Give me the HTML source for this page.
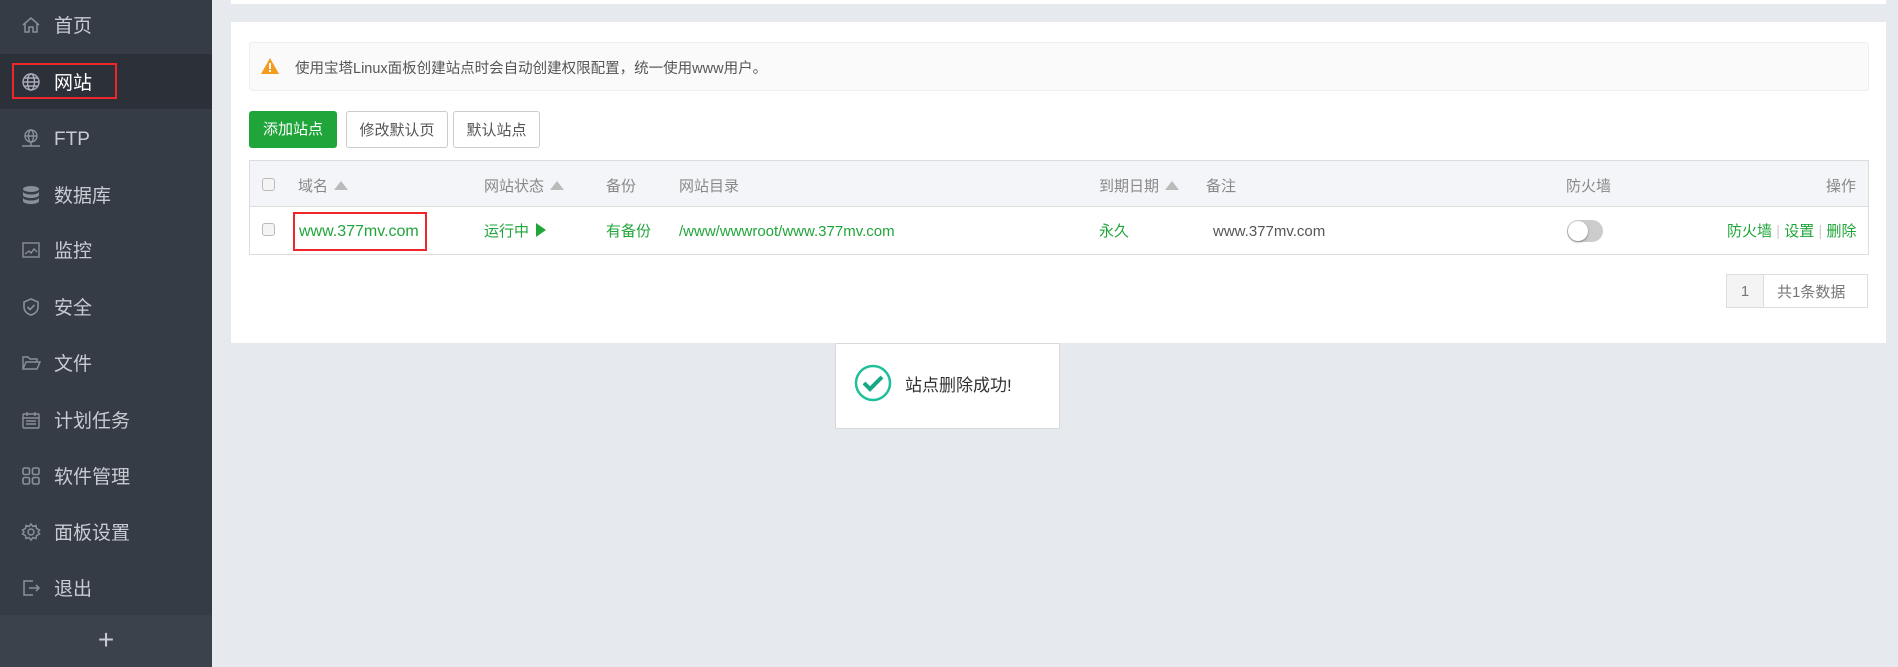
<!DOCTYPE html>
<html><head><meta charset="utf-8"><style>
*{margin:0;padding:0;box-sizing:border-box}
body{width:1898px;height:667px;overflow:hidden;background:#e6e9ee;font-family:"Liberation Sans","Noto Sans CJK SC",sans-serif;position:relative}
.a{position:absolute}
#side{left:0;top:0;width:212px;height:667px;background:#363c45}
.item{position:absolute;left:0;width:212px;height:56px;color:#c8ccd2;font-size:19px}
.item span{position:absolute;left:54px;line-height:56px;top:3px}
.item svg{position:absolute;left:21px;top:19px}
.th{position:absolute;top:164px;height:46px;line-height:46px;font-size:15px;color:#888}
.td{position:absolute;top:208px;height:48px;line-height:48px;font-size:15px;color:#20a53a}
.tri{display:inline-block;width:0;height:0;border-left:7px solid transparent;border-right:7px solid transparent;border-bottom:9px solid #bbb;margin-left:6px;vertical-align:1px}
.cb{position:absolute;width:13px;height:13px;border:1px solid #bbb;border-radius:3px;background:#f4f4f4}
.btn{position:absolute;top:111px;height:37px;line-height:37px;font-size:15px;text-align:center;border-radius:3px}
</style></head><body>
<div id="side" class="a">
 <div class="item" style="top:-4px"><svg width="20" height="20" viewBox="0 0 20 20" fill="none" stroke="#8a9099" stroke-width="1.5"><path d="M2 10L10 3l8 7M4 8.5V17h4v-5h4v5h4V8.5"/></svg><span>首页</span></div>
 <div class="a" style="left:0;top:54px;width:212px;height:55px;background:#2c3038"></div>
 <div class="item" style="top:53px;color:#fff"><svg width="20" height="20" viewBox="0 0 20 20" fill="none" stroke="#aab" stroke-width="1.4"><circle cx="10" cy="10" r="8"/><ellipse cx="10" cy="10" rx="3.5" ry="8"/><path d="M2 10h16M3.5 6h13M3.5 14h13"/></svg><span>网站</span></div>
 <div class="a" style="left:12px;top:63px;width:105px;height:36px;border:2px solid #f0262a"></div>
 <div class="item" style="top:109px"><svg width="20" height="20" viewBox="0 0 20 20" fill="none" stroke="#8a9099" stroke-width="1.4"><circle cx="10" cy="8" r="6"/><ellipse cx="10" cy="8" rx="2.5" ry="6"/><path d="M4 8h12M1 18h18M10 14v4"/></svg><span>FTP</span></div>
 <div class="item" style="top:166px"><svg width="20" height="20" viewBox="0 0 20 20" fill="#8a9099"><ellipse cx="10" cy="4" rx="8" ry="3"/><path d="M2 6.5c0 1.7 3.6 3 8 3s8-1.3 8-3V10c0 1.7-3.6 3-8 3s-8-1.3-8-3zM2 12.5c0 1.7 3.6 3 8 3s8-1.3 8-3V16c0 1.7-3.6 3-8 3s-8-1.3-8-3z"/></svg><span>数据库</span></div>
 <div class="item" style="top:221px"><svg width="20" height="20" viewBox="0 0 20 20" fill="none" stroke="#8a9099" stroke-width="1.4"><rect x="2" y="3" width="16" height="14"/><path d="M4 14l4-3 2 2 3-4 3 3"/></svg><span>监控</span></div>
 <div class="item" style="top:278px"><svg width="20" height="20" viewBox="0 0 20 20" fill="none" stroke="#8a9099" stroke-width="1.6"><path d="M10 2l7 3v5c0 4-3 7-7 8-4-1-7-4-7-8V5z"/><path d="M6.5 10l2.5 2.5 4.5-4.5"/></svg><span>安全</span></div>
 <div class="item" style="top:334px"><svg width="20" height="20" viewBox="0 0 20 20" fill="none" stroke="#8a9099" stroke-width="1.4"><path d="M2 16V4h5l2 2h7v3M2 16l3-7h14l-3 7z"/></svg><span>文件</span></div>
 <div class="item" style="top:391px"><svg width="20" height="20" viewBox="0 0 20 20" fill="none" stroke="#8a9099" stroke-width="1.4"><rect x="2" y="4" width="16" height="14" rx="1"/><path d="M2 8h16M6 2v4M14 2v4M5 11h10M5 14h10"/></svg><span>计划任务</span></div>
 <div class="item" style="top:447px"><svg width="20" height="20" viewBox="0 0 20 20" fill="none" stroke="#8a9099" stroke-width="1.6"><rect x="2" y="2" width="6.5" height="6.5" rx="1.5"/><rect x="11.5" y="2" width="6.5" height="6.5" rx="1.5"/><rect x="2" y="11.5" width="6.5" height="6.5" rx="1.5"/><rect x="11.5" y="11.5" width="6.5" height="6.5" rx="1.5"/></svg><span>软件管理</span></div>
 <div class="item" style="top:503px"><svg width="20" height="20" viewBox="0 0 20 20" fill="none" stroke="#8a9099" stroke-width="1.5"><circle cx="10" cy="10" r="3"/><path d="M10 2l2 2.5 3-1 .5 3 3 1.5-1.5 2 1.5 2-3 1.5-.5 3-3-1-2 2.5-2-2.5-3 1-.5-3-3-1.5 1.5-2-1.5-2 3-1.5.5-3 3 1z"/></svg><span>面板设置</span></div>
 <div class="item" style="top:559px"><svg width="20" height="20" viewBox="0 0 20 20" fill="none" stroke="#8a9099" stroke-width="1.5"><path d="M12 3H3v14h9M8 10h10M15 7l3 3-3 3"/></svg><span>退出</span></div>
 <div class="a" style="left:0;top:615px;width:212px;height:52px;background:#3c424b;color:#c8ccd2;font-size:28px;text-align:center;line-height:50px">+</div>
</div>
<div class="a" style="left:231px;top:0;width:1655px;height:4px;background:#fff"></div>
<div class="a" style="left:231px;top:22px;width:1655px;height:321px;background:#fff"></div>
<div class="a" style="left:249px;top:42px;width:1620px;height:49px;background:#fafafa;border:1px solid #eee;border-radius:3px"></div>
<svg class="a" style="left:261px;top:58px" width="18" height="16" viewBox="0 0 18 16"><path d="M9 0L18 16H0z" fill="#f39c1f"/><rect x="8" y="5" width="2" height="6" fill="#fff"/><rect x="8" y="12" width="2" height="2" fill="#fff"/></svg>
<div class="a" style="left:295px;top:45px;height:49px;line-height:49px;font-size:14.5px;color:#555">使用宝塔Linux面板创建站点时会自动创建权限配置，统一使用www用户。</div>
<div class="btn" style="left:249px;width:88px;background:#20a53a;color:#fff">添加站点</div>
<div class="btn" style="left:346px;width:102px;border:1px solid #ccc;color:#555;background:#fff">修改默认页</div>
<div class="btn" style="left:453px;width:87px;border:1px solid #ccc;color:#555;background:#fff">默认站点</div>
<div class="a" style="left:249px;top:160px;width:1620px;height:95px;border:1px solid #ddd;background:#fff"></div>
<div class="a" style="left:250px;top:161px;width:1618px;height:46px;background:#f4f5f9;border-bottom:1px solid #ddd"></div>
<div class="cb" style="left:262px;top:178px"></div>
<div class="th" style="left:298px">域名<i class="tri"></i></div>
<div class="th" style="left:484px">网站状态<i class="tri"></i></div>
<div class="th" style="left:606px">备份</div>
<div class="th" style="left:679px">网站目录</div>
<div class="th" style="left:1099px">到期日期<i class="tri"></i></div>
<div class="th" style="left:1206px">备注</div>
<div class="th" style="left:1566px">防火墙</div>
<div class="th" style="left:1826px">操作</div>
<div class="cb" style="left:262px;top:223px"></div>
<div class="a" style="left:293px;top:212px;width:134px;height:39px;border:2px solid #f0262a"></div>
<div class="td" style="left:299px;font-size:16px">www.377mv.com</div>
<div class="td" style="left:484px">运行中 <span style="display:inline-block;width:0;height:0;border-top:7px solid transparent;border-bottom:7px solid transparent;border-left:10px solid #20a53a;vertical-align:-1px;margin-left:3px"></span></div>
<div class="td" style="left:606px">有备份</div>
<div class="td" style="left:679px">/www/wwwroot/www.377mv.com</div>
<div class="td" style="left:1099px">永久</div>
<div class="td" style="left:1213px;color:#555">www.377mv.com</div>
<div class="a" style="left:1567px;top:220px;width:36px;height:22px;border-radius:11px;background:#ccc"></div>
<div class="a" style="left:1568px;top:221px;width:20px;height:20px;border-radius:50%;background:#fff;box-shadow:0 1px 2px rgba(0,0,0,.4)"></div>
<div class="td" style="left:1727px;color:#20a53a">防火墙 <span style="color:#ccc">|</span> 设置 <span style="color:#ccc">|</span> 删除</div>
<div class="a" style="left:1726px;top:274px;width:142px;height:34px;border:1px solid #ddd;background:#fff"></div>
<div class="a" style="left:1727px;top:275px;width:37px;height:32px;background:#f4f4f4;border-right:1px solid #ddd;color:#777;font-size:15px;text-align:center;line-height:34px">1</div>
<div class="a" style="left:1777px;top:277px;height:32px;line-height:32px;color:#777;font-size:15px">共1条数据</div>
<div class="a" style="left:835px;top:343px;width:225px;height:86px;background:#fff;border:1px solid #d9d9d9;border-radius:2px"></div>
<svg class="a" style="left:854px;top:364px" width="38" height="38" viewBox="0 0 38 38"><circle cx="19" cy="19" r="17" fill="none" stroke="#1fbf9b" stroke-width="2.5"/><path d="M10 19l6 6 12-12" fill="none" stroke="#15a885" stroke-width="4"/></svg>
<div class="a" style="left:905px;top:367px;height:38px;line-height:38px;font-size:17px;color:#333">站点删除成功!</div>
</body></html>
